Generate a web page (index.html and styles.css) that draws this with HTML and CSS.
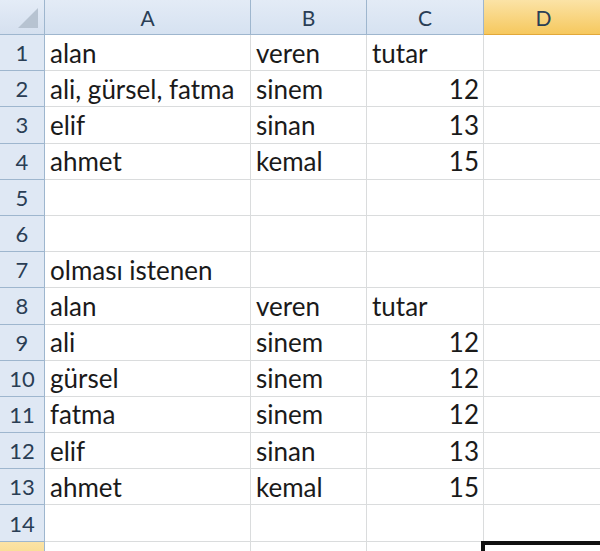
FILE: index.html
```html
<!DOCTYPE html>
<html>
<head>
<meta charset="utf-8">
<link rel="stylesheet" href="styles.css">
</head>
<body>
<div class="sheet">
  <div class="corner"><span class="tri"></span></div>
  <div class="ch">A</div>
  <div class="ch">B</div>
  <div class="ch">C</div>
  <div class="ch sel">D</div>

  <div class="rh">1</div><div class="c">alan</div><div class="c">veren</div><div class="c">tutar</div><div class="c"></div>
  <div class="rh">2</div><div class="c">ali, gürsel, fatma</div><div class="c">sinem</div><div class="c num">12</div><div class="c"></div>
  <div class="rh">3</div><div class="c">elif</div><div class="c">sinan</div><div class="c num">13</div><div class="c"></div>
  <div class="rh">4</div><div class="c">ahmet</div><div class="c">kemal</div><div class="c num">15</div><div class="c"></div>
  <div class="rh">5</div><div class="c"></div><div class="c"></div><div class="c"></div><div class="c"></div>
  <div class="rh">6</div><div class="c"></div><div class="c"></div><div class="c"></div><div class="c"></div>
  <div class="rh">7</div><div class="c">olması istenen</div><div class="c"></div><div class="c"></div><div class="c"></div>
  <div class="rh">8</div><div class="c">alan</div><div class="c">veren</div><div class="c">tutar</div><div class="c"></div>
  <div class="rh">9</div><div class="c">ali</div><div class="c">sinem</div><div class="c num">12</div><div class="c"></div>
  <div class="rh">10</div><div class="c">gürsel</div><div class="c">sinem</div><div class="c num">12</div><div class="c"></div>
  <div class="rh">11</div><div class="c">fatma</div><div class="c">sinem</div><div class="c num">12</div><div class="c"></div>
  <div class="rh">12</div><div class="c">elif</div><div class="c">sinan</div><div class="c num">13</div><div class="c"></div>
  <div class="rh">13</div><div class="c">ahmet</div><div class="c">kemal</div><div class="c num">15</div><div class="c"></div>
  <div class="rh">14</div><div class="c"></div><div class="c"></div><div class="c"></div><div class="c"></div>
  <div class="rh sel"></div><div class="c"></div><div class="c"></div><div class="c"></div><div class="c active"></div>
</div>
</body>
</html>
```

FILE: styles.css
```css
html, body {
  margin: 0;
  padding: 0;
  background: #ffffff;
  overflow: hidden;
}
.sheet {
  display: grid;
  grid-template-columns: 45px 206px 116px 117px 120px;
  grid-template-rows: 35px repeat(14, 36.2px) 1fr;
  width: 604px;
  height: 551px;
  overflow: hidden;
  font-family: Lato, "Open Sans", sans-serif;
  font-size: 26px;
  color: #1a1a1a;
}
.corner {
  position: relative;
  background: linear-gradient(#e4ecf7, #d5e0ef);
  border-right: 1px solid #9eb6ce;
  border-bottom: 1px solid #9eb6ce;
}
.tri {
  position: absolute;
  right: 6px;
  bottom: 6px;
  width: 0;
  height: 0;
  border-left: 20px solid transparent;
  border-bottom: 20px solid #b7c3d1;
}
.ch {
  display: flex;
  align-items: center;
  justify-content: center;
  background: linear-gradient(#e3ebf6, #d6e2f1);
  border-right: 1px solid #9eb6ce;
  border-bottom: 1px solid #9eb6ce;
  color: #2a3e55;
  font-size: 21px;
}
.ch.sel {
  background: linear-gradient(#fbe3a6, #f6c85e);
  border-right-color: #f2ca75;
  border-bottom-color: #e2a83a;
}
.rh {
  display: flex;
  align-items: center;
  justify-content: center;
  background: #dfe8f4;
  border-right: 1px solid #9eb6ce;
  border-bottom: 1px solid #9eb6ce;
  color: #2a3e55;
  font-size: 22px;
}
.rh.sel {
  background: linear-gradient(#fbe3a6, #f6c85e);
  border-bottom: none;
}
.c {
  display: flex;
  align-items: center;
  padding: 0 5px;
  border-right: 1px solid #dadcdd;
  border-bottom: 1px solid #dadcdd;
  white-space: nowrap;
  overflow: visible;
}
.c.num {
  justify-content: flex-end;
  padding-right: 4px;
}
.c.active {
  align-self: start;
  height: 40px;
  border: 4px solid #111;
  margin-left: -3px;
  margin-top: -1px;
}
```
